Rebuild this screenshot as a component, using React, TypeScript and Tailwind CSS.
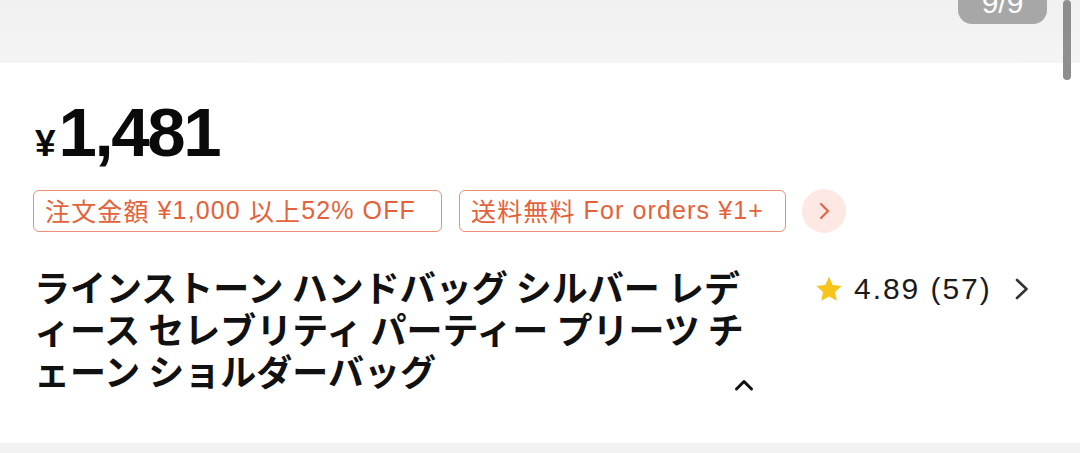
import React from "react";

const latin = { fontFamily: '"Liberation Sans", "Noto Sans CJK JP", sans-serif' };
const cjk = { fontFamily: '"Noto Sans CJK JP", "Liberation Sans", sans-serif' };

export default function App() {
  return (
    <div className="relative flex h-[453px] w-[1080px] flex-col overflow-hidden bg-white" style={latin}>
      {/* top gallery area */}
      <div className="relative h-[63px] shrink-0 bg-gradient-to-b from-[#f1f1f1] to-[#f4f4f4]">
        <div className="absolute left-[958px] top-[-20px] flex h-[44px] w-[89px] items-end justify-center rounded-[14px] bg-[#a7a7a7] pb-[6px]">
          <span className="text-[30px] leading-none text-white">9/9</span>
        </div>
      </div>
      <div className="absolute right-[9px] top-0 h-[80px] w-[8px] rounded-full bg-[#8e8e8e]" />

      <div className="flex flex-col px-[33px]">
        {/* price */}
        <div className="mt-[35px] ml-[2px] flex items-baseline text-[#0a0a0a]">
          <span className="text-[37px] font-bold leading-none">¥</span>
          <span className="ml-[3px] text-[69px] font-bold leading-none tracking-[-0.035em]">1,481</span>
        </div>

        {/* coupon tags */}
        <div className="mt-[22px] flex items-center">
          <div className="flex h-[42px] w-[409px] items-center rounded-[6px] border border-[#ec8f76] pl-[11px] text-[25px] tracking-[0.045em] text-[#e4623a] whitespace-nowrap">
            <span style={cjk}>注文金額</span>
            <span>&nbsp;¥1,000&nbsp;</span>
            <span style={cjk}>以上</span>
            <span>52% OFF</span>
          </div>
          <div className="ml-[17px] flex h-[42px] w-[327px] items-center rounded-[6px] border border-[#ec8f76] pl-[11px] text-[25px] tracking-[0.045em] text-[#e4623a] whitespace-nowrap">
            <span style={cjk}>送料無料</span>
            <span>&nbsp;For orders ¥1+</span>
          </div>
          <div className="ml-[16px] flex h-[44px] w-[44px] items-center justify-center rounded-full bg-[#fde8e3]">
            <svg width="16" height="20" viewBox="0 0 16 20" fill="none">
              <path d="M5 3l7 7-7 7" stroke="#e2664a" strokeWidth="2.2" strokeLinecap="round" strokeLinejoin="round" />
            </svg>
          </div>
        </div>

        {/* title + rating */}
        <div className="mt-[32px] flex items-start">
          <div className="relative ml-[1px] w-[740px] text-[36px] font-bold leading-[42px] text-[#111]" style={cjk}>
            <div className="whitespace-nowrap">ラインストーン ハンドバッグ シルバー レデ</div>
            <div className="whitespace-nowrap">ィース セレブリティ パーティー プリーツ チ</div>
            <div className="whitespace-nowrap">ェーン ショルダーバッグ</div>
            <div className="absolute left-[683px] top-[103px] flex h-[34px] w-[54px] items-center justify-center bg-white/80">
              <svg width="20" height="14" viewBox="0 0 20 14" fill="none">
                <path d="M2.5 11l7.5-7.5 7.5 7.5" stroke="#111" strokeWidth="3" strokeLinecap="round" strokeLinejoin="round" />
              </svg>
            </div>
          </div>
          <div className="ml-[40px] mt-[9px] flex items-center">
            <svg width="30" height="29" viewBox="0 0 24 24">
              <path d="M12 1.5l3.1 6.7 7.3.9-5.4 5 1.4 7.2L12 17.8l-6.4 3.5 1.4-7.2-5.4-5 7.3-.9z" fill="#f6c41a" />
            </svg>
            <span className="ml-[10px] text-[30px] leading-none tracking-[0.065em] text-[#1a1a1a]">4.89 (57)</span>
            <svg className="ml-[22px]" width="16" height="26" viewBox="0 0 16 26" fill="none">
              <path d="M3 4l9.5 9-9.5 9" stroke="#333" strokeWidth="2.6" strokeLinecap="round" strokeLinejoin="round" />
            </svg>
          </div>
        </div>
      </div>

      <div className="flex-1" />
      <div className="h-[10px] shrink-0 bg-[#f2f2f2]" />
    </div>
  );
}
